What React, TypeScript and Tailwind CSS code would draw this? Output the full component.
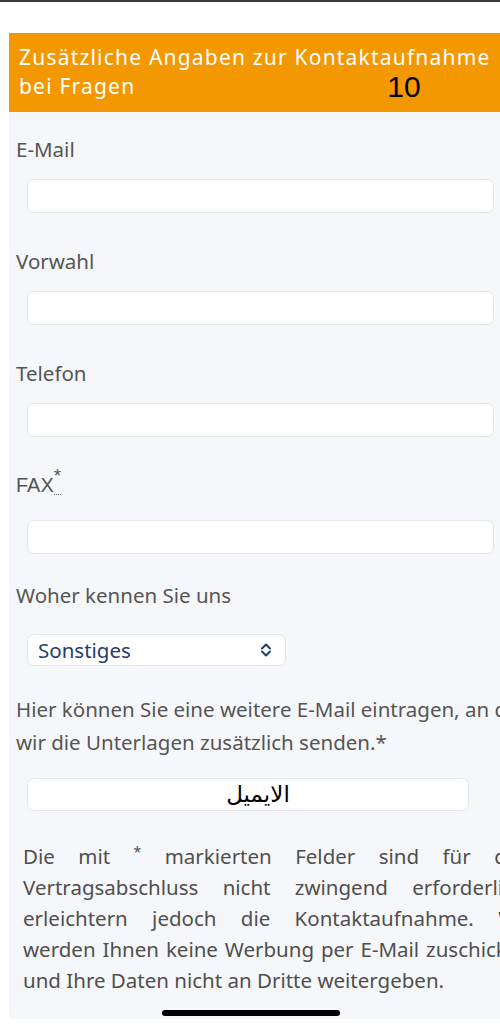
import React from 'react'

const fields = ['E-Mail', 'Vorwahl', 'Telefon']

function TextBox({ width = 'w-[467px]' }: { width?: string }) {
  return (
    <div className={`ml-[11px] h-[34px] ${width} rounded-[7px] border border-[#e4e6eb] bg-white`} />
  )
}

function UpDown() {
  return (
    <svg width="12" height="14" viewBox="0 0 12 14" fill="none" stroke="#1f3d6e" strokeWidth="2" strokeLinecap="round" strokeLinejoin="round">
      <path d="M2 5.5 L6 1.5 L10 5.5" />
      <path d="M2 8.5 L6 12.5 L10 8.5" />
    </svg>
  )
}

export default function App() {
  return (
    <div className="relative w-[500px] min-h-[1024px] overflow-hidden bg-white border-t-2 border-[#3a3a3a] font-['Noto_Sans',sans-serif]">
      <div className="ml-[9px] mt-[31px] w-[560px]">
        {/* orange heading */}
        <div className="h-[79px] bg-[#f39800] pl-[10px] pt-[10px] text-[21px] leading-[29px] tracking-[1.2px] text-white">
          <div className="whitespace-nowrap">Zusätzliche Angaben zur Kontaktaufnahme</div>
          <div className="whitespace-nowrap">
            bei Fragen
            <span className="ml-[252px] align-[-3px] font-['Liberation_Sans',sans-serif] text-[30px] tracking-normal text-black">10</span>
          </div>
        </div>

        {/* form panel */}
        <div className="rounded-bl-[4px] bg-[#f6f7fa] pl-[7px] pt-[23px] pb-[23px] text-[20.5px] text-[#555555]">
          {fields.map((f) => (
            <div key={f} className="mb-[34px]">
              <div className="mb-[16px] leading-[28px]">{f}</div>
              <TextBox />
            </div>
          ))}

          <div className="mb-[27px]">
            <div className="mb-[16px] h-[33px] pt-[1px] font-['Liberation_Sans',sans-serif] text-[20px] leading-[26px]">
              FAX
              <abbr className="relative -top-[10px] pb-[8px] text-[19px] leading-none no-underline border-b border-dotted border-[#555555]">*</abbr>
            </div>
            <TextBox />
          </div>

          <div className="mb-[27px]">
            <div className="mb-[25px] leading-[28px]">Woher kennen Sie uns</div>
            <div className="ml-[11px] flex h-[32px] w-[259px] items-center justify-between rounded-[7px] border border-[#e4e6eb] bg-white pl-[10px] pr-[13px] text-[#1f3d6e]">
              <span>Sonstiges</span>
              <UpDown />
            </div>
          </div>

          <p className="mb-[19px] w-[540px] leading-[33px]">
            Hier können Sie eine weitere E-Mail eintragen, an die wir die Unterlagen zusätzlich senden.*
          </p>

          <div className="ml-[11px] flex h-[33px] w-[442px] items-center justify-center rounded-[7px] border border-[#e4e6eb] bg-white pl-[20px] font-['DejaVu_Sans',sans-serif] text-[23px] text-black">
            <span dir="rtl">الايميل</span>
          </div>

          <p className="ml-[7px] mt-[30px] w-[508px] text-justify leading-[31px] text-[#4f4f4f]">
            Die mit <sup className="text-[14px] leading-none">*</sup> markierten Felder sind für den Vertragsabschluss nicht zwingend erforderlich, erleichtern jedoch die Kontaktaufnahme. Wir werden Ihnen keine Werbung per E-Mail zuschicken und Ihre Daten nicht an Dritte weitergeben.
          </p>
        </div>
      </div>

      {/* home indicator */}
      <div className="absolute left-[162px] top-[1008px] h-[6px] w-[178px] rounded-full bg-black" />
    </div>
  )
}
